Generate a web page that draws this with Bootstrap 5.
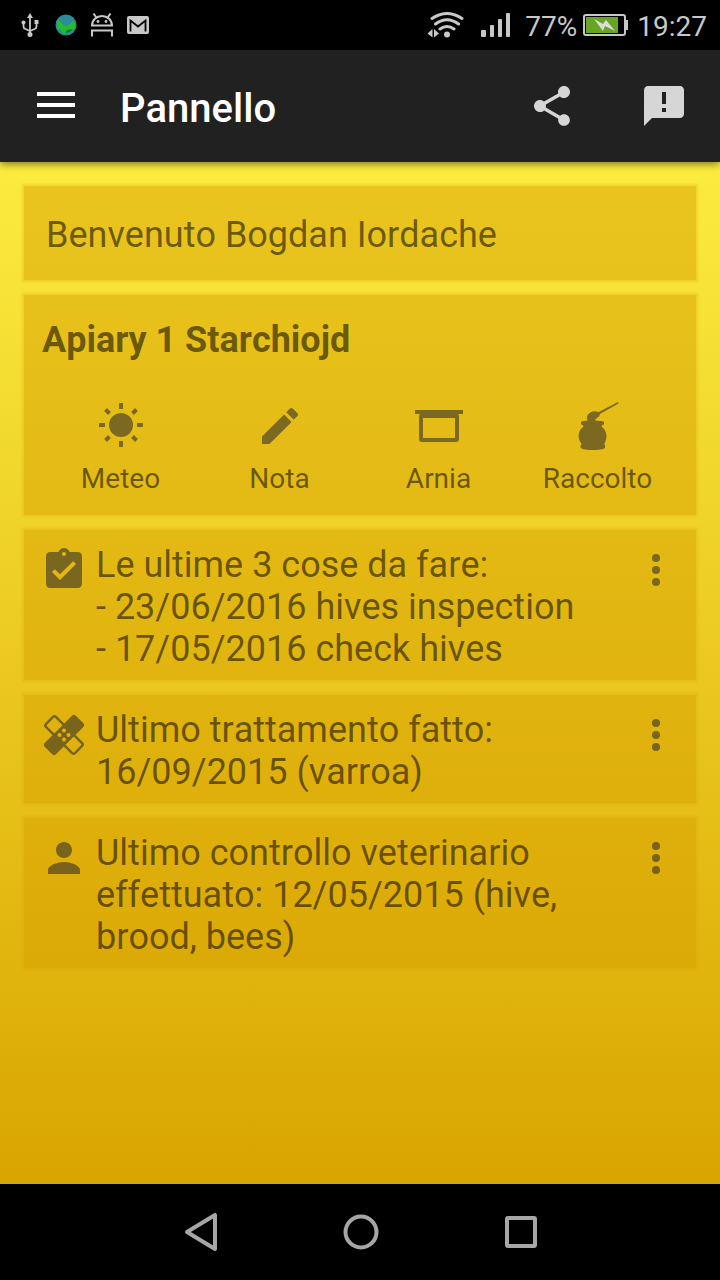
<!DOCTYPE html>
<html lang="it">
<head>
<meta charset="utf-8">
<meta name="viewport" content="width=device-width, initial-scale=1">
<title>Pannello</title>
<link href="https://cdn.jsdelivr.net/npm/bootstrap@5.3.0/dist/css/bootstrap.min.css" rel="stylesheet">
<style>
  body { font-family: Roboto, "Liberation Sans", sans-serif; font-size: 36px; line-height: 42px; font-kerning: none; background: #000; }
  svg { display: block; flex: none; }
  button { background: none; border: 0; padding: 0; color: inherit; }
  .status-bar { height: 50px; padding: 0 13px 0 18px; background: #000; color: #c8c8c8; font-size: 28px; line-height: 34px; }
  .status-icons { gap: 12px; }
  .status-info { gap: 15px; }
  .status-power { gap: 6px; }
  .status-power span { padding-top: 3px; }
  .status-clock { margin-left: 2px; }
  .app-bar { height: 112px; padding: 0 32px; background: #212121; color: #fff; box-shadow: 0 2px 8px rgba(0,0,0,.5); z-index: 1; }
  .app-title { font-size: 40px; line-height: 48px; font-weight: 500; margin: 6px 0 0 40px; }
  .app-actions { gap: 64px; color: #d6d6d6; }
  .panel { background: linear-gradient(#fcec3f, #d9a500); padding: 24px; }
  .panel-stack { gap: 15px; }
  .tile { --bs-card-bg: rgba(215,159,0,.5); --bs-card-border-width: 0; --bs-card-border-radius: 0; --bs-card-color: rgba(0,0,0,.55); color: rgba(0,0,0,.55); box-shadow: 0 0 2px 2px rgba(215,159,0,.25); }
  .tile svg { color: #26262a; opacity: .55; }
  .tile-welcome { padding: 28px 22px 24px; }
  .tile-apiary { padding: 24px 19px 19px 17px; }
  .tile-apiary h2 { font-size: 36px; line-height: 42px; font-weight: 700; margin: 0 0 41px 1px; }
  .apiary-action { font-size: 28px; line-height: 34px; gap: 12px; }
  .tile-note { padding: 14px 16px 10px; gap: 8px; }
  .tile-note svg { margin-top: 2px; }
  .nav-keys { height: 96px; background: #000; color: #a6a6a6; }
  .nav-keys button { width: 160px; height: 96px; }
</style>
</head>
<body>
<div class="d-flex flex-column min-vh-100">
  <div class="status-bar d-flex align-items-center justify-content-between">
    <div class="status-icons d-flex align-items-center">
      <svg width="24" height="24" viewBox="0 0 24 24" fill="none" stroke="currentColor" stroke-width="1.800"><path d="M12 4v17M5.500 10v3.500q0 2 2 2.500l4.500 2 4.500-2q2-.5 2-2.500V9"/><g fill="currentColor" stroke="none"><path d="M12 0l3 5H9z"/><circle cx="12" cy="21.500" r="2.500"/><circle cx="5.500" cy="9.500" r="2"/><path d="M16.500 7h4v4h-4z"/></g></svg>
      <svg width="24" height="24" viewBox="0 0 24 24"><circle cx="12" cy="12" r="10.500" fill="#2b8c9c"/><path d="M3 7q3 0 4 2t4 4l2 0 7-5 1.500 5-2 4-6 1-2 3-3-1-2-3-3-2z" fill="#25bd2f"/><path d="M11 20l2-3 6-1-3 3z" fill="#147a2a"/></svg>
      <svg width="24" height="24" viewBox="0 0 24 24" fill="none" stroke="currentColor" stroke-width="2"><path d="M2 12.500a10 9.500 0 0 1 20 0zM6 4L3.500.5M18 4l2.500-3.500M2 23.500V17.500h20v6"/><g fill="currentColor" stroke="none"><circle cx="8" cy="8.500" r="1.400"/><circle cx="16" cy="8.500" r="1.400"/></g></svg>
      <svg width="24" height="24" viewBox="0 0 24 24"><rect x="1" y="3" width="22" height="18" rx="2" fill="currentColor"/><path d="M4.500 18.500V7.500l7.500 6 7.500-6v11" fill="none" stroke="#000" stroke-width="1.800"/></svg>
    </div>
    <div class="status-info d-flex align-items-center">
      <svg width="38" height="26" viewBox="0 0 38 26"><g fill="none" stroke="currentColor" stroke-width="3" stroke-linecap="round"><path d="M5 6.500q15-10 30 0M8.500 12q11.500-8.500 23 0M13 17q7-5 14 0"/></g><circle cx="20" cy="22.500" r="3" fill="currentColor"/><path d="M5.500 17v8.500l-5-4zM7 17v8.500l5-4z" fill="currentColor"/></svg>
      <svg width="30" height="26" viewBox="0 0 30 26" fill="currentColor"><rect x="1" y="18" width="5" height="7" rx="1"/><rect x="10" y="13" width="4" height="12" rx="1"/><rect x="18" y="7" width="4" height="18" rx="1"/><rect x="26" y="1" width="4" height="24" rx="1"/></svg>
      <div class="status-power d-flex align-items-center">
        <span>77%</span>
        <svg width="46" height="24" viewBox="0 0 46 24"><rect x="1" y="2" width="41" height="20" rx="2" fill="none" stroke="currentColor" stroke-width="2"/><path d="M43 7h2v10h-2z" fill="currentColor"/><path d="M3 4h32v16H3z" fill="#68a524"/><path d="M11 6l9 5 3-4 9 11-10-5-2 5z" fill="#dcdcdc"/></svg>
        <span class="status-clock">19:27</span>
      </div>
    </div>
  </div>

  <header class="app-bar d-flex align-items-center">
    <button type="button" aria-label="Menu"><svg width="48" height="48" viewBox="0 0 48 48" fill="currentColor"><path d="M5 10h38v4H5zM5 21h38v4H5zM5 32h38v4H5z"/></svg></button>
    <h1 class="app-title flex-grow-1">Pannello</h1>
    <div class="app-actions d-flex">
      <button type="button" aria-label="Condividi"><svg width="48" height="48" viewBox="0 0 24 24" fill="currentColor"><path d="M18 16.080c-.76 0-1.440.3-1.960.77L8.910 12.700c.05-.23.09-.46.09-.7s-.04-.47-.09-.7l7.050-4.110c.54.5 1.250.81 2.040.81 1.660 0 3-1.340 3-3s-1.340-3-3-3-3 1.340-3 3c0 .24.040.47.090.7L8.040 9.810C7.500 9.310 6.790 9 6 9c-1.660 0-3 1.340-3 3s1.340 3 3 3c.79 0 1.500-.31 2.040-.81l7.120 4.160c-.05.21-.08.43-.08.65 0 1.610 1.310 2.920 2.920 2.920s2.920-1.310 2.920-2.920-1.310-2.920-2.920-2.920z"/></svg></button>
      <button type="button" aria-label="Feedback"><svg width="48" height="48" viewBox="0 0 24 24" fill="currentColor"><path d="M20 2H4c-1.100 0-1.990.9-1.990 2L2 22l4-4h14c1.100 0 2-.9 2-2V4c0-1.100-.9-2-2-2zm-7 13h-2v-2h2v2zm0-4h-2V5h2v6z"/></svg></button>
    </div>
  </header>

  <main class="panel flex-grow-1">
    <div class="panel-stack d-flex flex-column">
      <section class="card tile tile-welcome">Benvenuto Bogdan Iordache</section>

      <section class="card tile tile-apiary">
        <h2>Apiary 1 Starchiojd</h2>
        <div class="row g-0">
          <div class="col-3"><button type="button" class="apiary-action w-100 d-flex flex-column align-items-center">
            <svg width="48" height="48" viewBox="0 0 48 48"><circle cx="24" cy="23" r="12" fill="currentColor"/><g stroke="currentColor" stroke-width="4"><path d="M24 1v6M24 39v6M2 23h6M40 23h6M8.500 7.500l4 4M35.500 34.500l4 4M8.500 38.500l4-4M35.500 11.500l4-4"/></g></svg>
            <span>Meteo</span></button></div>
          <div class="col-3"><button type="button" class="apiary-action w-100 d-flex flex-column align-items-center">
            <svg width="48" height="48" viewBox="0 0 24 24" fill="currentColor"><path d="M3 17.250V21h3.750L17.810 9.940l-3.750-3.750L3 17.250zM20.710 7.040c.39-.39.39-1.020 0-1.410l-2.340-2.340c-.39-.39-1.020-.39-1.410 0l-1.830 1.830 3.750 3.750 1.830-1.830z"/></svg>
            <span>Nota</span></button></div>
          <div class="col-3"><button type="button" class="apiary-action w-100 d-flex flex-column align-items-center">
            <svg width="48" height="48" viewBox="0 0 48 48"><path d="M0 8h48v4h-5q1 1 1 2v23q0 3-3 3H7q-3 0-3-3V14q0-1 1-2H0zM8 16v20h32V16z" fill="currentColor" fill-rule="evenodd"/></svg>
            <span>Arnia</span></button></div>
          <div class="col-3"><button type="button" class="apiary-action w-100 d-flex flex-column align-items-center">
            <svg width="48" height="48" viewBox="0 0 48 48" fill="currentColor"><path d="M44 0l.5 1.500-18.500 10.500q0 2.500-3 4-2 1-2 2.500 7 0 9 1.500v2.500q-2 0-2.500 2 5 4 5 9.500 0 4.500-2.200 8 1.200 1.500.7 4-3 2-12 2t-12.300-2q-.7-2.500.8-4Q4.500 38.500 4.500 34q0-5.500 5-9.500-.5-2-2.500-2V20q2-1.500 7-1.500-1.500-1-1.200-3.500.5-3 3.500-4.500 3.500-2 8.500-.5z"/></svg>
            <span>Raccolto</span></button></div>
        </div>
      </section>

      <section class="card tile tile-note flex-row align-items-start">
        <svg width="48" height="48" viewBox="0 0 24 24" fill="currentColor"><path d="M19 3h-4.180C14.400 1.840 13.300 1 12 1c-1.300 0-2.400.84-2.820 2H5c-1.100 0-2 .9-2 2v14c0 1.100.9 2 2 2h14c1.100 0 2-.9 2-2V5c0-1.100-.9-2-2-2zm-7 0c.55 0 1 .45 1 1s-.45 1-1 1-1-.45-1-1 .45-1 1-1zm-2 14l-4-4 1.410-1.410L10 14.170l6.590-6.590L18 9l-8 8z"/></svg>
        <div class="flex-fill">Le ultime 3 cose da fare:
          <ul class="list-unstyled mb-0"><li>- 23/06/2016 hives inspection</li><li>- 17/05/2016 check hives</li></ul>
        </div>
        <button type="button" aria-label="Altro"><svg width="48" height="48" viewBox="0 0 24 24" fill="currentColor"><circle cx="12" cy="6" r="2"/><circle cx="12" cy="12" r="2"/><circle cx="12" cy="18" r="2"/></svg></button>
      </section>

      <section class="card tile tile-note flex-row align-items-start">
        <svg width="48" height="48" viewBox="0 0 48 48"><mask id="plaster"><path d="M0 0h48v48H0z" fill="#fff"/><circle cx="24" cy="19.500" r="2"/><circle cx="19.500" cy="24" r="2"/><circle cx="28.500" cy="24" r="2"/><circle cx="24" cy="28.500" r="2"/></mask><g mask="url(#plaster)"><rect x="3.500" y="17" width="41" height="14" rx="2" transform="rotate(45 24 24)" fill="none" stroke="currentColor" stroke-width="2.500"/><rect x="2" y="16" width="44" height="16" rx="3" transform="rotate(-45 24 24)" fill="currentColor"/></g></svg>
        <div class="flex-fill">Ultimo trattamento fatto:<br>16/09/2015 (varroa)</div>
        <button type="button" aria-label="Altro"><svg width="48" height="48" viewBox="0 0 24 24" fill="currentColor"><circle cx="12" cy="6" r="2"/><circle cx="12" cy="12" r="2"/><circle cx="12" cy="18" r="2"/></svg></button>
      </section>

      <section class="card tile tile-note flex-row align-items-start">
        <svg width="48" height="48" viewBox="0 0 24 24" fill="currentColor"><path d="M12 12c2.210 0 4-1.790 4-4s-1.790-4-4-4-4 1.790-4 4 1.790 4 4 4zm0 2c-2.670 0-8 1.340-8 4v2h16v-2c0-2.660-5.330-4-8-4z"/></svg>
        <div class="flex-fill">Ultimo controllo veterinario effettuato: 12/05/2015 (hive, brood, bees)</div>
        <button type="button" aria-label="Altro"><svg width="48" height="48" viewBox="0 0 24 24" fill="currentColor"><circle cx="12" cy="6" r="2"/><circle cx="12" cy="12" r="2"/><circle cx="12" cy="18" r="2"/></svg></button>
      </section>
    </div>
  </main>

  <nav class="nav-keys d-flex justify-content-center" aria-label="Sistema">
    <button type="button" class="d-flex align-items-center justify-content-center" aria-label="Indietro"><svg width="40" height="40" viewBox="0 0 40 40" fill="none" stroke="currentColor" stroke-width="4" stroke-linejoin="round"><path d="M35 3v34L7 20z"/></svg></button>
    <button type="button" class="d-flex align-items-center justify-content-center" aria-label="Home"><svg width="40" height="40" viewBox="0 0 40 40" fill="none" stroke="currentColor" stroke-width="4"><circle cx="21" cy="20" r="15.500"/></svg></button>
    <button type="button" class="d-flex align-items-center justify-content-center" aria-label="Recenti"><svg width="40" height="40" viewBox="0 0 40 40" fill="none" stroke="currentColor" stroke-width="4"><rect x="7" y="6" width="28" height="28" rx="1"/></svg></button>
  </nav>
</div>
<script src="https://cdn.jsdelivr.net/npm/bootstrap@5.3.0/dist/js/bootstrap.bundle.min.js"></script>
</body>
</html>
